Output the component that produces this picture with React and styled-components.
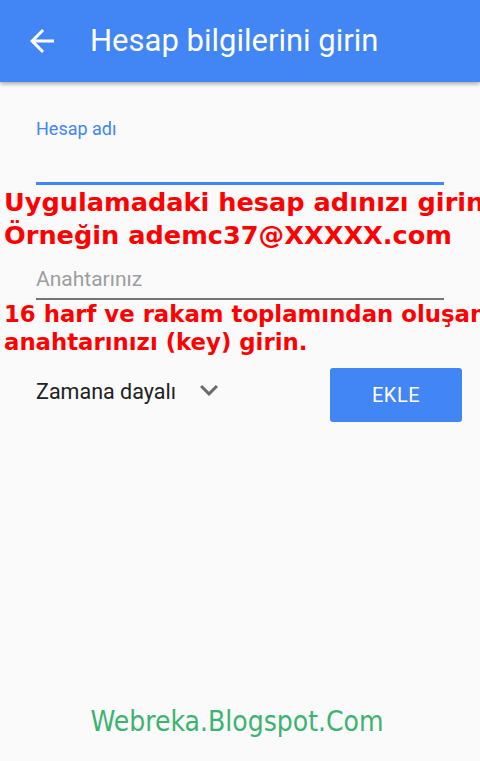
import React from "react";
import styled, { createGlobalStyle } from "styled-components";

const Global = createGlobalStyle`
  html, body { margin: 0; padding: 0; background: #fafafa; }
  body { font-family: Roboto, "Liberation Sans", sans-serif; }
  * { box-sizing: border-box; }
`;

const Screen = styled.div`
  width: 480px;
  height: 761px;
  display: flex;
  flex-direction: column;
  background: #fafafa;
  overflow: hidden;
`;

const AppBar = styled.header`
  height: 82px;
  flex: none;
  display: flex;
  align-items: center;
  gap: 30px;
  padding-left: 24px;
  background: #4285f4;
  box-shadow: 0 2px 4px rgba(0, 0, 0, 0.32);
  position: relative;
  z-index: 1;
`;

const BackIcon = styled.svg`
  width: 36px;
  height: 36px;
  fill: #ffffff;
  flex: none;
`;

const Title = styled.h1`
  margin: 0;
  font-family: Roboto, sans-serif;
  font-weight: 400;
  font-size: 31px;
  line-height: 36px;
  color: #ffffff;
`;

const Field = styled.div`
  margin: ${(p) => p.$top}px 36px 0;
  display: flex;
  flex-direction: column;
`;

const Label = styled.div`
  font-size: 18px;
  line-height: 24px;
  color: #4285f4;
`;

const InputLine = styled.div`
  height: ${(p) => p.$h}px;
  padding-top: ${(p) => p.$pt || 0}px;
  font-size: 21px;
  line-height: 28px;
  color: #9e9e9e;
  border-bottom: ${(p) => (p.$active ? "3px solid #4285f4" : "2px solid #757575")};
`;

const Note = styled.p`
  margin: ${(p) => p.$top}px 0 0 4px;
  font-family: "DejaVu Sans", Verdana, sans-serif;
  font-weight: 700;
  font-size: ${(p) => p.$size}px;
  line-height: ${(p) => p.$lh}px;
  color: #ff0000;
  white-space: nowrap;
  overflow: hidden;
`;

const ActionRow = styled.div`
  margin-top: 12px;
  display: flex;
  align-items: flex-start;
  justify-content: space-between;
  padding: 0 18px 0 36px;
`;

const Select = styled.div`
  margin-top: 8px;
  display: flex;
  align-items: center;
  font-size: 21.5px;
  line-height: 28px;
  color: #212121;
`;

const Chevron = styled.svg`
  width: 36px;
  height: 36px;
  fill: #6b6b6b;
  margin-left: 15px;
  margin-top: -4px;
`;

const AddButton = styled.button`
  width: 132px;
  height: 54px;
  border: none;
  border-radius: 3px;
  background: #4285f4;
  color: #ffffff;
  font-family: Roboto, sans-serif;
  font-size: 20px;
  font-weight: 400;
  letter-spacing: 0.5px;
  padding: 0;
`;

const Footer = styled.div`
  margin-top: auto;
  padding: 0 6px 22px 0;
  text-align: center;
  font-family: "DejaVu Sans Condensed", "DejaVu Sans", Verdana, sans-serif;
  font-stretch: condensed;
  font-size: 28px;
  line-height: 34px;
  color: #3cb371;
`;

export default function App() {
  return (
    <>
      <Global />
      <Screen>
        <AppBar>
          <BackIcon viewBox="0 0 24 24">
            <path d="M20 11H7.83l5.59-5.59L12 4l-8 8 8 8 1.41-1.41L7.83 13H20v-2z" />
          </BackIcon>
          <Title>Hesap bilgilerini girin</Title>
        </AppBar>

        <Field $top={35}>
          <Label>Hesap adı</Label>
          <InputLine $active $h={44} />
        </Field>

        <Note $top={1} $size={25.6} $lh={33}>
          Uygulamadaki hesap adınızı girin
          <br />
          Örneğin ademc37@XXXXX.com
        </Note>

        <Field $top={0}>
          <InputLine $h={48} $pt={13}>Anahtarınız</InputLine>
        </Field>

        <Note $top={0} $size={22.8} $lh={28}>
          16 harf ve rakam toplamından oluşan
          <br />
          anahtarınızı (key) girin.
        </Note>

        <ActionRow>
          <Select>
            Zamana dayalı
            <Chevron viewBox="0 0 24 24">
              <path d="M16.59 8.59L12 13.17 7.41 8.59 6 10l6 6 6-6z" />
            </Chevron>
          </Select>
          <AddButton>EKLE</AddButton>
        </ActionRow>

        <Footer>Webreka.Blogspot.Com</Footer>
      </Screen>
    </>
  );
}
